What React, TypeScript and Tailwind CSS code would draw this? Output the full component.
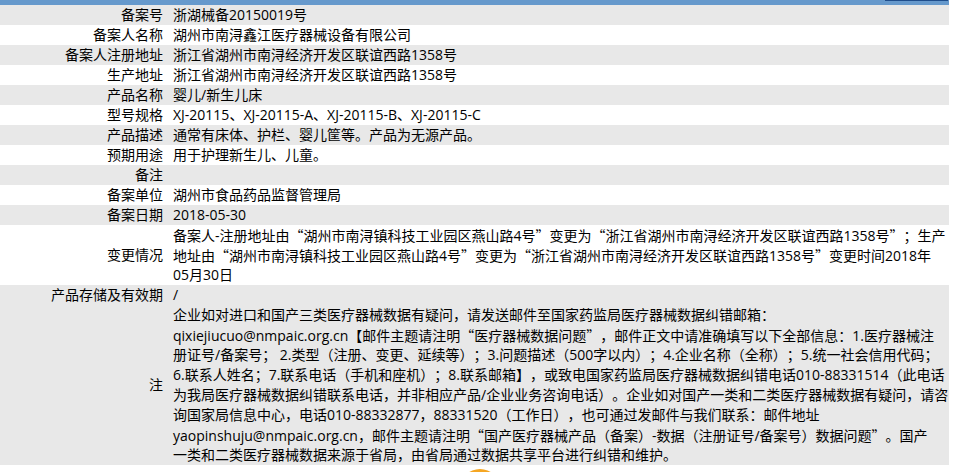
import type { ReactNode } from "react";

const rows: { label: string; value: string }[] = [
  { label: "备案号", value: "浙湖械备20150019号" },
  { label: "备案人名称", value: "湖州市南浔鑫江医疗器械设备有限公司" },
  { label: "备案人注册地址", value: "浙江省湖州市南浔经济开发区联谊西路1358号" },
  { label: "生产地址", value: "浙江省湖州市南浔经济开发区联谊西路1358号" },
  { label: "产品名称", value: "婴儿/新生儿床" },
  { label: "型号规格", value: "XJ-20115、XJ-20115-A、XJ-20115-B、XJ-20115-C" },
  { label: "产品描述", value: "通常有床体、护栏、婴儿筐等。产品为无源产品。" },
  { label: "预期用途", value: "用于护理新生儿、儿童。" },
  { label: "备注", value: "" },
  { label: "备案单位", value: "湖州市食品药品监督管理局" },
  { label: "备案日期", value: "2018-05-30" },
];

const changeLines = [
  "备案人-注册地址由“湖州市南浔镇科技工业园区燕山路4号”变更为“浙江省湖州市南浔经济开发区联谊西路1358号”；生产",
  "地址由“湖州市南浔镇科技工业园区燕山路4号”变更为“浙江省湖州市南浔经济开发区联谊西路1358号”变更时间2018年",
  "05月30日",
];

const noteLines = [
  "企业如对进口和国产三类医疗器械数据有疑问，请发送邮件至国家药监局医疗器械数据纠错邮箱：",
  "qixiejiucuo@nmpaic.org.cn【邮件主题请注明“医疗器械数据问题”，邮件正文中请准确填写以下全部信息：1.医疗器械注",
  "册证号/备案号； 2.类型（注册、变更、延续等）；3.问题描述（500字以内）；4.企业名称（全称）；5.统一社会信用代码；",
  "6.联系人姓名；7.联系电话（手机和座机）；8.联系邮箱】，或致电国家药监局医疗器械数据纠错电话010-88331514（此电话",
  "为我局医疗器械数据纠错联系电话，并非相应产品/企业业务咨询电话）。企业如对国产一类和二类医疗器械数据有疑问，请咨",
  "询国家局信息中心，电话010-88332877，88331520（工作日），也可通过发邮件与我们联系：邮件地址",
  "yaopinshuju@nmpaic.org.cn，邮件主题请注明“国产医疗器械产品（备案）-数据（注册证号/备案号）数据问题”。国产",
  "一类和二类医疗器械数据来源于省局，由省局通过数据共享平台进行纠错和维护。",
];

// curly quotes should come from the CJK face so they take a full cell
function cjk(text: string): ReactNode[] {
  return text.split(/([“”])/).map((part, i) =>
    part === "“" || part === "”" ? (
      <span className="font-['Noto_Sans_CJK_SC']" key={i}>
        {part}
      </span>
    ) : (
      part
    ),
  );
}

// one fixed-height box per line so mixed fonts don't stretch the rows
function Lines({ lines }: { lines: string[] }) {
  return (
    <>
      {lines.map((line, i) => (
        <div className="h-5 whitespace-nowrap" key={i}>
          {cjk(line)}
        </div>
      ))}
    </>
  );
}

function Row({
  label,
  children,
  gray,
  align = "center",
}: {
  label: string;
  children: ReactNode;
  gray?: boolean;
  align?: "center" | "start";
}) {
  return (
    <div className={`flex ${gray ? "bg-[#e8e8e8]" : "bg-white"}`}>
      <div
        className={`flex w-[165px] shrink-0 justify-end pr-[2px] ${
          align === "center" ? "items-center" : "items-start"
        }`}
      >
        <div className="h-5">{label}</div>
      </div>
      <div className="min-h-5 flex-1 pl-[8px]">{children}</div>
    </div>
  );
}

export default function App() {
  return (
    <div
      lang="zh-CN"
      className="w-[954px] bg-white font-['Open_Sans','Noto_Sans_CJK_SC',sans-serif] text-[14px] leading-5 text-black [text-spacing-trim:space-all]"
    >
      <div className="flex h-[5px] w-[949px] justify-end bg-[#6699cc]">
        <div className="mr-[1px] h-[1px] w-[63px] bg-[#1f4e8c]" />
      </div>
      <div className="w-[949px]">
        {rows.map((row, i) => (
          <Row label={row.label} gray={i % 2 === 0} key={row.label}>
            <Lines lines={[row.value]} />
          </Row>
        ))}
        <Row label="变更情况">
          <Lines lines={changeLines} />
        </Row>
        <Row label="产品存储及有效期" gray align="start">
          <Lines lines={["/"]} />
        </Row>
        <Row label="注" gray>
          <Lines lines={noteLines} />
        </Row>
      </div>
      <div className="ml-[460px] mt-[4px] h-10 w-10 rounded-full bg-[#f5a623]" />
    </div>
  );
}
